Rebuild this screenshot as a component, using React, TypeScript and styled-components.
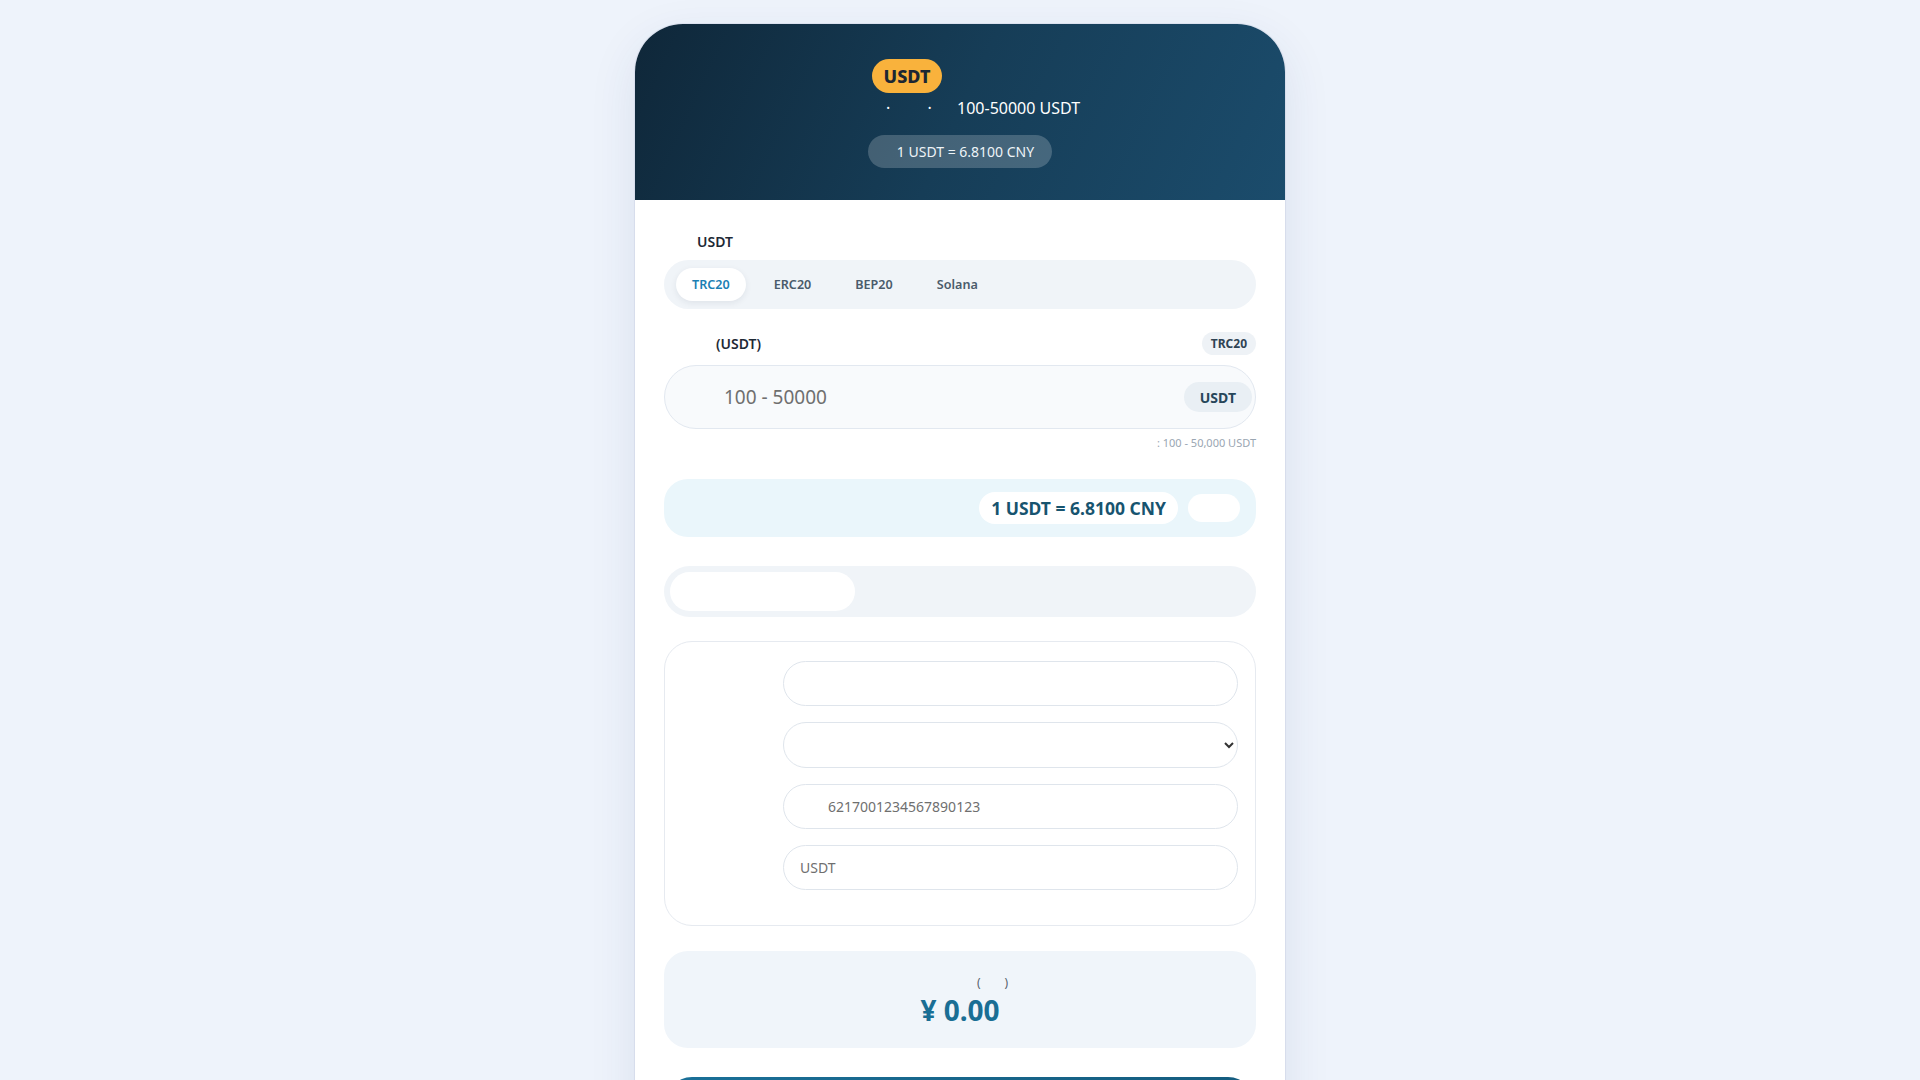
import React from "react";
import styled, { createGlobalStyle } from "styled-components";

const Global = createGlobalStyle`
  * { box-sizing: border-box; }
  html, body { margin: 0; padding: 0; }
  body {
    background: #eef3fb;
    font-family: "Noto Sans", "Open Sans", sans-serif;
    color: #1e2935;
  }
  input, select, button { font-family: inherit; }
`;

const Page = styled.div`
  padding: 24px 0 0;
  min-height: 100vh;
`;

const Card = styled.div`
  width: 650px;
  margin: 0 auto;
  background: #ffffff;
  border-radius: 48px 48px 0 0;
  overflow: hidden;
  box-shadow: 0 16px 48px rgba(40, 60, 120, 0.10), 0 0 0 1px rgba(200, 205, 230, 0.35);
`;

const Header = styled.header`
  display: flex;
  flex-direction: column;
  align-items: center;
  padding: 35px 30px 32px;
  background: linear-gradient(115deg, #0f2739 0%, #163d57 50%, #1b4c6c 100%);
  color: #ffffff;
`;

const TitleRow = styled.div`
  display: flex;
  align-items: center;
  gap: 10px;
  height: 34px;
`;

const CoinBadge = styled.span`
  display: inline-flex;
  align-items: center;
  height: 34px;
  padding: 0 12px;
  border-radius: 17px;
  background: #f9b23c;
  color: #1c2733;
  font-size: 18px;
  font-weight: 800;
`;

const Blank = styled.span<{ $w: number }>`
  display: inline-block;
  width: ${(p) => p.$w}px;
  height: 1px;
`;

const SubRow = styled.div`
  margin-top: 3px;
  font-size: 16px;
  line-height: 24px;
  white-space: pre;
  color: #ffffff;
`;

const HeaderRate = styled.div`
  margin-top: 15px;
  display: flex;
  align-items: center;
  height: 33px;
  padding: 0 18px;
  border-radius: 17px;
  background: rgba(255, 255, 255, 0.2);
  color: #eef4f8;
  font-size: 14px;
  white-space: pre;
`;

const Body = styled.main`
  padding: 32px 29px 40px;
`;

const Label = styled.div`
  font-size: 14px;
  font-weight: 600;
  line-height: 20px;
  color: #1e2935;
  white-space: pre;
`;

const NetLabel = styled(Label)`
  margin-bottom: 8px;
`;

const Tabs = styled.div`
  display: flex;
  gap: 12px;
  padding: 8px 12px;
  background: #f0f4f8;
  border-radius: 25px;
`;

const Tab = styled.button<{ $active?: boolean }>`
  height: 33px;
  padding: 0 16px;
  border: none;
  border-radius: 17px;
  background: ${(p) => (p.$active ? "#ffffff" : "transparent")};
  box-shadow: ${(p) => (p.$active ? "0 2px 6px rgba(20, 40, 70, 0.08)" : "none")};
  color: ${(p) => (p.$active ? "#1b80b4" : "#4a5b6b")};
  font-size: 12.6px;
  font-weight: 600;
  cursor: pointer;
`;

const FieldHead = styled.div`
  margin-top: 23px;
  display: flex;
  align-items: center;
  justify-content: space-between;
  margin-bottom: 10px;
`;

const NetBadge = styled.span`
  display: inline-flex;
  align-items: center;
  height: 23px;
  padding: 0 9px;
  border-radius: 12px;
  background: #eef2f6;
  color: #2f4354;
  font-size: 12px;
  font-weight: 700;
`;

const AmountWrap = styled.div`
  position: relative;
`;

const AmountInput = styled.input`
  display: block;
  width: 100%;
  height: 64px;
  padding: 0 90px 0 59px;
  border: 1px solid #e2e8f0;
  border-radius: 32px;
  background: #f8fafc;
  font-size: 19px;
  color: #333;
  outline: none;
  &::placeholder { color: #6f6f6f; }
`;

const Suffix = styled.span`
  position: absolute;
  right: 4px;
  top: 50%;
  transform: translateY(-50%);
  display: inline-flex;
  align-items: center;
  height: 30px;
  padding: 0 16px;
  border-radius: 15px;
  background: #e9eff4;
  color: #27465a;
  font-size: 14px;
  font-weight: 700;
`;

const Hint = styled.div`
  margin-top: 6px;
  text-align: right;
  font-size: 11px;
  line-height: 16px;
  color: #9aa6b2;
`;

const RateBox = styled.div`
  margin-top: 28px;
  height: 58px;
  display: flex;
  align-items: center;
  justify-content: flex-end;
  gap: 10px;
  padding: 0 16px 0 20px;
  border-radius: 24px;
  background: #eaf6fb;
`;

const RateValue = styled.span`
  display: inline-flex;
  align-items: center;
  height: 32px;
  padding: 0 12px;
  border-radius: 16px;
  background: #ffffff;
  color: #17546f;
  font-size: 17.5px;
  font-weight: 700;
`;

const RefreshBtn = styled.button`
  width: 52px;
  height: 28px;
  border: none;
  border-radius: 14px;
  background: #ffffff;
  cursor: pointer;
`;

const Segment = styled.div`
  margin-top: 29px;
  display: grid;
  grid-template-columns: repeat(3, 1fr);
  gap: 12px;
  padding: 6px;
  border-radius: 26px;
  background: #f0f4f8;
`;

const SegItem = styled.button<{ $active?: boolean }>`
  height: 39px;
  border: none;
  border-radius: 20px;
  background: ${(p) => (p.$active ? "#ffffff" : "transparent")};
  cursor: pointer;
`;

const FormCard = styled.section`
  margin-top: 24px;
  display: flex;
  flex-direction: column;
  gap: 16px;
  padding: 19px 17px 35px;
  border: 1px solid #e6eaf0;
  border-radius: 28px;
`;

const FormRow = styled.div`
  display: grid;
  grid-template-columns: 89px 1fr;
  gap: 12px;
  align-items: center;
`;

const RowLabel = styled.label`
  font-size: 14px;
  color: #3a4652;
`;

const FormInput = styled.input`
  width: 100%;
  height: 45px;
  padding: 0 16px;
  border: 1px solid #dfe5ec;
  border-radius: 23px;
  background: #ffffff;
  font-size: 14px;
  color: #333;
  outline: none;
  &::placeholder { color: #6f6f6f; }
`;

const FormSelect = styled.select`
  width: 100%;
  height: 46px;
  padding: 0 6px 0 16px;
  border: 1px solid #dfe5ec;
  border-radius: 23px;
  background: #ffffff;
  font-size: 14px;
  color: #333;
  outline: none;
`;

const TotalBox = styled.div`
  margin-top: 25px;
  padding: 23px 0 20px;
  border-radius: 24px;
  background: #f0f5fa;
  text-align: center;
`;

const TotalLabel = styled.div`
  font-size: 12px;
  line-height: 18px;
  color: #56616c;
  white-space: pre;
`;

const TotalAmount = styled.div`
  margin-top: 2px;
  font-size: 28px;
  line-height: 1.2;
  font-weight: 700;
  color: #1a6e94;
`;

const SubmitButton = styled.button`
  display: block;
  width: 100%;
  margin-top: 29px;
  height: 56px;
  border: none;
  border-radius: 28px;
  background: linear-gradient(135deg, #1a7098 0%, #145a7c 100%);
  color: #ffffff;
  font-size: 17px;
  font-weight: 700;
  cursor: pointer;
`;

const networks = ["TRC20", "ERC20", "BEP20", "Solana"];

export default function App() {
  const [net, setNet] = React.useState("TRC20");
  const [mode, setMode] = React.useState(0);

  return (
    <>
      <Global />
      <Page>
        <Card>
          <Header>
            <TitleRow>
              <CoinBadge>USDT</CoinBadge>
              <Blank $w={96} />
            </TitleRow>
            <SubRow>
              <Blank $w={42} />
              {" · "}
              <Blank $w={29} />
              {" · "}
              <Blank $w={21} />
              100-50000 USDT
            </SubRow>
            <HeaderRate>
              <Blank $w={11} />1 USDT = 6.8100 CNY
            </HeaderRate>
          </Header>

          <Body>
            <NetLabel>
              <Blank $w={33} />USDT
            </NetLabel>
            <Tabs>
              {networks.map((n) => (
                <Tab key={n} $active={net === n} onClick={() => setNet(n)}>
                  {n}
                </Tab>
              ))}
            </Tabs>

            <FieldHead>
              <Label>
                <Blank $w={52} />(USDT)
              </Label>
              <NetBadge>{net}</NetBadge>
            </FieldHead>
            <AmountWrap>
              <AmountInput placeholder="100 - 50000" />
              <Suffix>USDT</Suffix>
            </AmountWrap>
            <Hint>: 100 - 50,000 USDT</Hint>

            <RateBox>
              <RateValue>1 USDT = 6.8100 CNY</RateValue>
              <RefreshBtn aria-label="refresh" />
            </RateBox>

            <Segment>
              {[0, 1, 2].map((i) => (
                <SegItem key={i} $active={mode === i} onClick={() => setMode(i)} />
              ))}
            </Segment>

            <FormCard>
              <FormRow>
                <RowLabel />
                <FormInput />
              </FormRow>
              <FormRow>
                <RowLabel />
                <FormSelect defaultValue="">
                  <option value=""></option>
                </FormSelect>
              </FormRow>
              <FormRow>
                <RowLabel />
                <FormInput placeholder={"\u3000\u30006217001234567890123"} />
              </FormRow>
              <FormRow>
                <RowLabel />
                <FormInput placeholder="USDT" />
              </FormRow>
            </FormCard>

            <TotalBox>
              <TotalLabel>
                <Blank $w={65} />(<Blank $w={24} />)
              </TotalLabel>
              <TotalAmount>¥ 0.00</TotalAmount>
            </TotalBox>

            <SubmitButton />
          </Body>
        </Card>
      </Page>
    </>
  );
}
